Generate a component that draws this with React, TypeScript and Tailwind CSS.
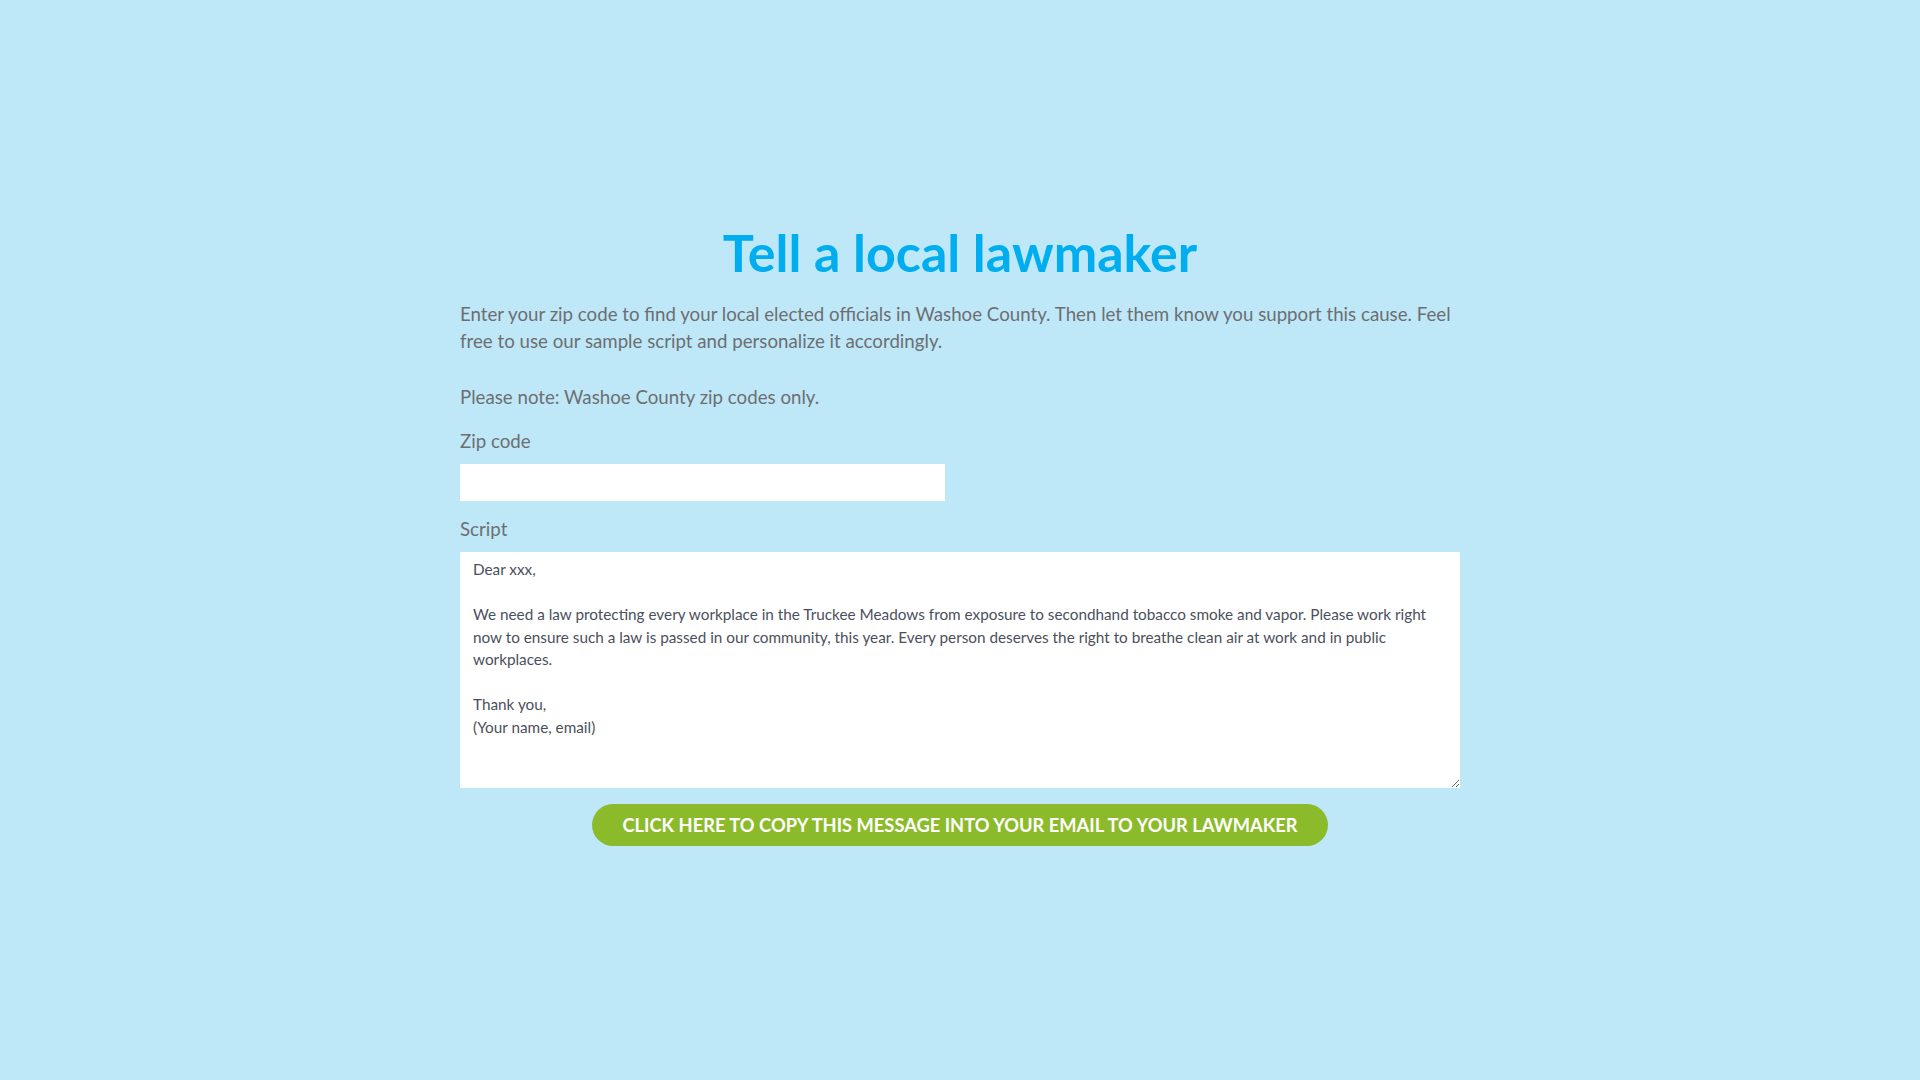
import * as React from 'react';

const defaultScript = `Dear xxx,

We need a law protecting every workplace in the Truckee Meadows from exposure to secondhand tobacco smoke and vapor. Please work right now to ensure such a law is passed in our community, this year. Every person deserves the right to breathe clean air at work and in public workplaces.

Thank you,
(Your name, email)`;

const App: React.FC = () => {
    const [zip, setZip] = React.useState('');
    const [script, setScript] = React.useState(defaultScript);

    return (
        <div className="min-h-screen w-full bg-[#bee8f8] font-['Lato','Open_Sans',sans-serif]">
            <div className="mx-auto w-[1000px] pt-[217px]">
                <h1 className="text-center text-[52px] font-bold leading-[70px] text-[#00aeef]">
                    Tell a local lawmaker
                </h1>
                <p className="mt-[14px] text-[18.7px] leading-[27px] text-[#6d6e71]">
                    Enter your zip code to find your local elected officials in Washoe County. Then let them know you support this cause. Feel free to use our sample script and personalize it accordingly.
                </p>
                <p className="mt-[29px] text-[18.7px] leading-[27px] text-[#6d6e71]">
                    Please note: Washoe County zip codes only.
                </p>
                <label className="mt-[17px] block text-[18.7px] leading-[27px] text-[#6d6e71]" htmlFor="zip">
                    Zip code
                </label>
                <input
                    id="zip"
                    type="text"
                    value={zip}
                    onChange={(e) => setZip(e.target.value)}
                    className="mt-[9px] block h-[37px] w-[485px] bg-white px-3 text-[16px] text-[#4b4f5c] outline-none"
                />
                <label className="mt-[15px] block text-[18.7px] leading-[27px] text-[#6d6e71]" htmlFor="script">
                    Script
                </label>
                <textarea
                    id="script"
                    value={script}
                    onChange={(e) => setScript(e.target.value)}
                    className="mt-[9px] block h-[236px] w-full bg-white px-[13px] py-[6px] text-[15.3px] leading-[22.5px] text-[#4b4f5c] outline-none"
                />
                <div className="mt-[16px] flex justify-center">
                    <button
                        type="button"
                        className="h-[42px] w-[736px] rounded-full bg-[#8bbb2b] pt-[1px] text-[18.3px] font-bold uppercase text-white"
                    >
                        Click here to copy this message into your email to your lawmaker
                    </button>
                </div>
            </div>
        </div>
    );
};

export default App;
